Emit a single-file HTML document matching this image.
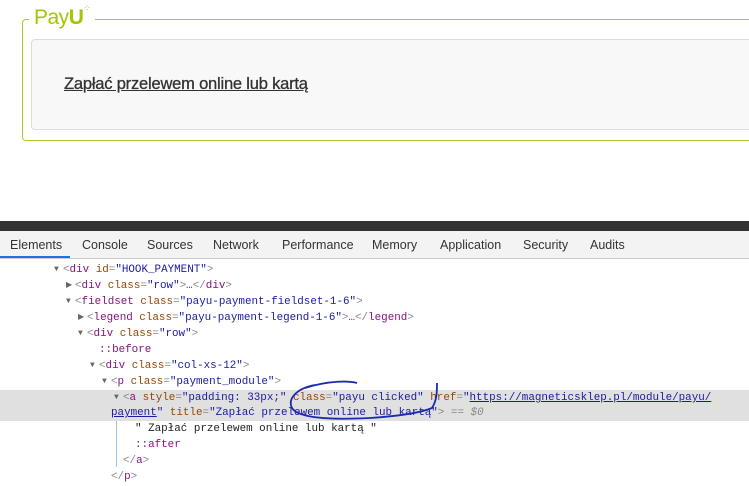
<!DOCTYPE html>
<html><head><meta charset="utf-8"><style>
*{margin:0;padding:0;box-sizing:border-box}
body{width:749px;height:486px;overflow:hidden;background:#fff;position:relative;font-family:"Liberation Sans",sans-serif}
.fs{position:absolute;left:22px;top:19px;width:740px;height:122px;border:1px solid #b5c532;border-radius:4px}
.legend{position:absolute;left:29px;top:6px;background:#fff;padding:0 5px;font-size:21px;color:#a6c307;letter-spacing:-0.5px}
.legend b{font-weight:bold}
.inner{position:absolute;left:31px;top:39px;width:730px;height:91px;background:#f8f8f8;border:1px solid #ddd;border-radius:4px}
.link{position:absolute;left:64px;top:75px;font-size:16.5px;color:#333;text-decoration:underline;letter-spacing:-0.2px;-webkit-text-stroke:0.3px #333}
.dark{position:absolute;left:0;top:221px;width:749px;height:10px;background:#333}
.tabs{position:absolute;left:0;top:231px;width:749px;height:28px;background:#f3f3f3;border-bottom:1px solid #ccc;font-family:"Liberation Sans",sans-serif;font-size:12.5px;color:#333}
.tabs span{position:absolute;top:7px}
.ul{position:absolute;left:0;top:256px;width:70px;height:2px;background:#1a73e8}
.code{position:absolute;left:0;top:262px;width:749px;font-family:"Liberation Mono",monospace;font-size:10.9px;line-height:16px;color:#881280}
.l{position:absolute;white-space:pre;height:16px}
.a{color:#994500}.v{color:#1a1aa6}.p{color:#888}.x{color:#222}.u{color:#1a1aa6;text-decoration:underline}
.ar{color:#666;font-size:8px;display:inline-block;width:9px;vertical-align:1px}
.hl{position:absolute;left:0;top:390px;width:749px;height:31px;background:#e0e0e0}
.vl{position:absolute;left:116px;top:421px;width:1px;height:46px;background:#9cc6e8}
</style></head><body>
<div class="fs"></div>
<div class="legend">Pay<b>U</b><span style="font-size:9px;vertical-align:top;position:relative;top:-3px">⁘</span></div>
<div class="inner"></div>
<div class="link">Zapłać przelewem online lub kartą</div>
<div class="dark"></div>
<div class="tabs">
<span style="left:10px">Elements</span><span style="left:82px">Console</span><span style="left:147px">Sources</span><span style="left:213px">Network</span><span style="left:282px">Performance</span><span style="left:372px">Memory</span><span style="left:440px">Application</span><span style="left:523px">Security</span><span style="left:590px">Audits</span>
</div>
<div class="ul"></div>
<div class="hl"></div>
<div class="vl"></div>
<div class="code">
<div class="l" style="left:54px;top:0"><span class="ar">▼</span><span class="p">&lt;</span>div <span class="a">id</span><span class="p">=</span><span class="v">"HOOK_PAYMENT"</span><span class="p">&gt;</span></div>
<div class="l" style="left:66px;top:16px"><span class="ar">▶</span><span class="p">&lt;</span>div <span class="a">class</span><span class="p">=</span><span class="v">"row"</span><span class="p">&gt;</span>…<span class="p">&lt;/</span>div<span class="p">&gt;</span></div>
<div class="l" style="left:66px;top:32px"><span class="ar">▼</span><span class="p">&lt;</span>fieldset <span class="a">class</span><span class="p">=</span><span class="v">"payu-payment-fieldset-1-6"</span><span class="p">&gt;</span></div>
<div class="l" style="left:78px;top:48px"><span class="ar">▶</span><span class="p">&lt;</span>legend <span class="a">class</span><span class="p">=</span><span class="v">"payu-payment-legend-1-6"</span><span class="p">&gt;</span>…<span class="p">&lt;/</span>legend<span class="p">&gt;</span></div>
<div class="l" style="left:78px;top:64px"><span class="ar">▼</span><span class="p">&lt;</span>div <span class="a">class</span><span class="p">=</span><span class="v">"row"</span><span class="p">&gt;</span></div>
<div class="l" style="left:99px;top:80px">::before</div>
<div class="l" style="left:90px;top:96px"><span class="ar">▼</span><span class="p">&lt;</span>div <span class="a">class</span><span class="p">=</span><span class="v">"col-xs-12"</span><span class="p">&gt;</span></div>
<div class="l" style="left:102px;top:112px"><span class="ar">▼</span><span class="p">&lt;</span>p <span class="a">class</span><span class="p">=</span><span class="v">"payment_module"</span><span class="p">&gt;</span></div>
<div class="l" style="left:114px;top:128px"><span class="ar">▼</span><span class="p">&lt;</span>a <span class="a">style</span><span class="p">=</span><span class="v">"padding: 33px;"</span> <span class="a">class</span><span class="p">=</span><span class="v">"payu clicked"</span> <span class="a">href</span><span class="p">=</span><span class="v">"</span><span class="u">https://magneticsklep.pl/module/payu/</span></div>
<div class="l" style="left:111px;top:143px"><span class="u">payment</span><span class="v">"</span> <span class="a">title</span><span class="p">=</span><span class="v">"Zapłać przelewem online lub kartą"</span><span class="p">&gt;</span> <span class="p">== <i>$0</i></span></div>
<div class="l x" style="left:135px;top:159px">" Zapłać przelewem online lub kartą "</div>
<div class="l" style="left:135px;top:175px">::after</div>
<div class="l" style="left:123px;top:191px"><span class="p">&lt;/</span>a<span class="p">&gt;</span></div>
<div class="l" style="left:111px;top:207px"><span class="p">&lt;/</span>p<span class="p">&gt;</span></div>
</div>
<svg style="position:absolute;left:0;top:0" width="749" height="486"><path d="M305 388 C330 380 350 381 357 383 M315 385 C298 388 287 398 292 408 C298 418 330 420 370 418 C400 416 420 413 432 408 C437 400 437 392 437 383" fill="none" stroke="#1b2bb0" stroke-width="1.8"/></svg>
</body></html>
